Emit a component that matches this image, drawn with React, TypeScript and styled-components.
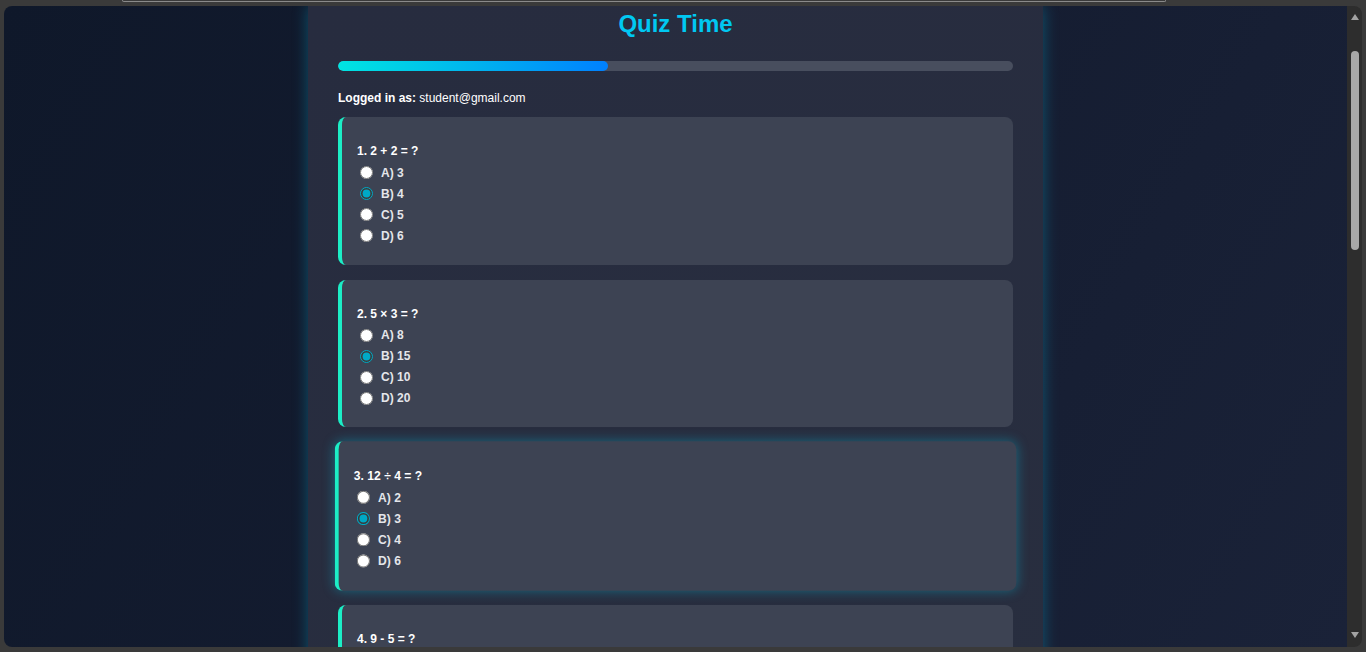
import React from "react";
import styled, { createGlobalStyle } from "styled-components";

const Global = createGlobalStyle`
  html, body { margin: 0; padding: 0; height: 652px; overflow: hidden; background: #3a3a3a; }
  * { box-sizing: border-box; }
  body { font-family: "Liberation Sans", Arial, sans-serif; }
`;

const Window = styled.div`
  width: 1366px;
  height: 652px;
  background: #3a3a3a;
  display: flex;
  flex-direction: column;
`;

const TopStrip = styled.div`
  height: 6px;
  display: flex;
`;

const AddressEdge = styled.div`
  margin-left: 122px;
  width: 1044px;
  height: 2px;
  border: 1px solid #8a8a8a;
  border-top: none;
  border-radius: 0 0 6px 6px;
`;

const Frame = styled.div`
  flex: 1;
  display: flex;
  margin: 0 4px 5px 4px;
  border-radius: 8px;
  overflow: hidden;
`;

const Viewport = styled.div`
  flex: 1;
  height: 641px;
  overflow: hidden;
  background: linear-gradient(120deg, #0f182a 0%, #141c30 50%, #1a2238 100%);
`;

const Scrollbar = styled.div`
  width: 15px;
  background: #2d2d2d;
  display: flex;
  flex-direction: column;
  align-items: center;
  padding: 8px 0 9px;
`;

const ArrowUp = styled.div`
  width: 0;
  height: 0;
  border-left: 4.5px solid transparent;
  border-right: 4.5px solid transparent;
  border-bottom: 6px solid #a3a3a3;
`;

const ArrowDown = styled.div`
  width: 0;
  height: 0;
  border-left: 4.5px solid transparent;
  border-right: 4.5px solid transparent;
  border-top: 6px solid #a3a3a3;
`;

const Thumb = styled.div`
  width: 8px;
  height: 199px;
  margin-top: 31px;
  border-radius: 4px;
  background: #a8a8a8;
`;

const Spacer = styled.div`
  flex: 1;
`;

const Panel = styled.div`
  width: 735px;
  min-height: 100%;
  margin: 0 auto;
  padding: 4px 30px 0;
  background: linear-gradient(160deg, #272c3f 0%, #282e3f 100%);
  box-shadow: 0 0 14px rgba(0, 190, 230, 0.35);
`;

const Title = styled.h1`
  margin: 0;
  font-size: 24px;
  line-height: 28px;
  font-weight: 700;
  text-align: center;
  color: #00c8f2;
`;

const Track = styled.div`
  margin-top: 23px;
  height: 10px;
  border-radius: 5px;
  background: #484e5e;
  overflow: hidden;
`;

const Fill = styled.div`
  height: 100%;
  border-radius: 5px;
  background: linear-gradient(90deg, #00e4e2 0%, #00b4ee 50%, #0080ff 100%);
`;

const UserLine = styled.p`
  margin: 20px 0 12px;
  font-size: 12px;
  line-height: 14px;
  color: #ffffff;
  b { font-weight: 700; }
`;

const Card = styled.div<{ $active?: boolean }>`
  height: 147.5px;
  margin-bottom: 15px;
  padding: 27px 15px 0;
  border-left: 4px solid #1ceec6;
  border-radius: 8px;
  background: #3d4353;
  transform: ${(p) => (p.$active ? "scale(1.01)" : "none")};
  box-shadow: ${(p) => (p.$active ? "0 0 12px rgba(0, 210, 240, 0.35)" : "none")};
`;

const Question = styled.div`
  font-size: 12px;
  line-height: 14px;
  font-weight: 700;
  color: #ffffff;
  margin-bottom: 4px;
`;

const Option = styled.label`
  display: flex;
  align-items: center;
  height: 21px;
  font-size: 12px;
  font-weight: 700;
  color: #e4e6ea;
`;

const Radio = styled.input`
  width: 13px;
  height: 13px;
  margin: 0 8px 0 3px;
  accent-color: #00a9c6;
`;

const quiz = [
  { q: "1. 2 + 2 = ?", opts: ["A) 3", "B) 4", "C) 5", "D) 6"], sel: 1 },
  { q: "2. 5 × 3 = ?", opts: ["A) 8", "B) 15", "C) 10", "D) 20"], sel: 1 },
  { q: "3. 12 ÷ 4 = ?", opts: ["A) 2", "B) 3", "C) 4", "D) 6"], sel: 1 },
  { q: "4. 9 - 5 = ?", opts: ["A) 3", "B) 4", "C) 5", "D) 14"], sel: -1 },
];

export default function App() {
  return (
    <>
      <Global />
      <Window>
        <TopStrip>
          <AddressEdge />
        </TopStrip>
        <Frame>
          <Viewport>
            <Panel>
              <Title>Quiz Time</Title>
              <Track>
                <Fill style={{ width: "40%" }} />
              </Track>
              <UserLine>
                <b>Logged in as:</b> student@gmail.com
              </UserLine>
              {quiz.map((item, qi) => (
                <Card key={qi} $active={qi === 2}>
                  <Question>{item.q}</Question>
                  {item.opts.map((o, oi) => (
                    <Option key={oi}>
                      <Radio
                        type="radio"
                        name={`q${qi}`}
                        defaultChecked={item.sel === oi}
                      />
                      {o}
                    </Option>
                  ))}
                </Card>
              ))}
            </Panel>
          </Viewport>
          <Scrollbar>
            <ArrowUp />
            <Thumb />
            <Spacer />
            <ArrowDown />
          </Scrollbar>
        </Frame>
      </Window>
    </>
  );
}
